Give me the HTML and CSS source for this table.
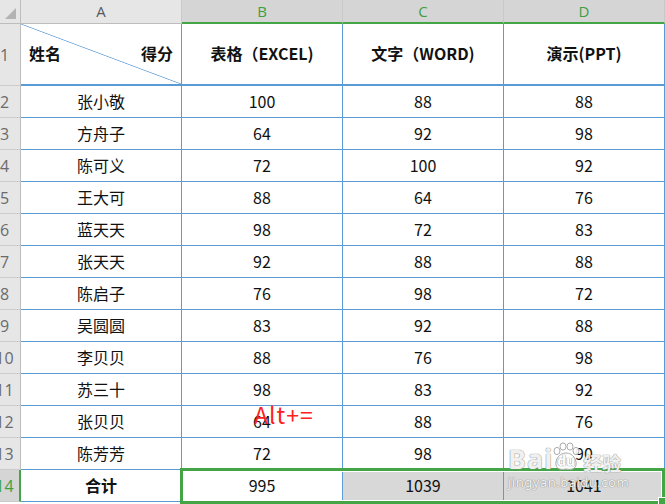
FILE: index.html
```html
<!DOCTYPE html>
<html lang="zh">
<head>
<meta charset="utf-8">
<title>Sheet</title>
<link rel="stylesheet" href="styles.css">
</head>
<body>
<div class="sheet">
  <div class="grid">
    <div class="corner"></div>
    <div class="colhead">A</div>
    <div class="colhead sel">B</div>
    <div class="colhead sel">C</div>
    <div class="colhead sel">D</div>

    <div class="rowhead"><span>1</span></div>
    <div class="cell head diag"><span>姓名</span><span>得分</span></div>
    <div class="cell head">表格（EXCEL)</div>
    <div class="cell head">文字（WORD)</div>
    <div class="cell head">演示(PPT)</div>

    <div class="rowhead"><span>2</span></div><div class="cell">张小敬</div><div class="cell">100</div><div class="cell">88</div><div class="cell">88</div>
    <div class="rowhead"><span>3</span></div><div class="cell">方舟子</div><div class="cell">64</div><div class="cell">92</div><div class="cell">98</div>
    <div class="rowhead"><span>4</span></div><div class="cell">陈可义</div><div class="cell">72</div><div class="cell">100</div><div class="cell">92</div>
    <div class="rowhead"><span>5</span></div><div class="cell">王大可</div><div class="cell">88</div><div class="cell">64</div><div class="cell">76</div>
    <div class="rowhead"><span>6</span></div><div class="cell">蓝天天</div><div class="cell">98</div><div class="cell">72</div><div class="cell">83</div>
    <div class="rowhead"><span>7</span></div><div class="cell">张天天</div><div class="cell">92</div><div class="cell">88</div><div class="cell">88</div>
    <div class="rowhead"><span>8</span></div><div class="cell">陈启子</div><div class="cell">76</div><div class="cell">98</div><div class="cell">72</div>
    <div class="rowhead"><span>9</span></div><div class="cell">吴圆圆</div><div class="cell">83</div><div class="cell">92</div><div class="cell">88</div>
    <div class="rowhead"><span>10</span></div><div class="cell">李贝贝</div><div class="cell">88</div><div class="cell">76</div><div class="cell">98</div>
    <div class="rowhead"><span>11</span></div><div class="cell">苏三十</div><div class="cell">98</div><div class="cell">83</div><div class="cell">92</div>
    <div class="rowhead"><span>12</span></div><div class="cell">张贝贝</div><div class="cell">64</div><div class="cell">88</div><div class="cell">76</div>
    <div class="rowhead"><span>13</span></div><div class="cell">陈芳芳</div><div class="cell">72</div><div class="cell">98</div><div class="cell">90</div>
    <div class="rowhead sel"><span>14</span></div><div class="cell total">合计</div><div class="cell">995</div><div class="cell shaded">1039</div><div class="cell shaded">1041</div>
  </div>

  <div class="selection"><div class="handle"></div></div>
  <div class="note">Alt+=</div>

  <div class="watermark">
    <div class="wm-top">
      <span class="wm-bai">Bai</span>
      <span class="wm-paw">
        <svg width="30" height="30" viewBox="0 0 30 30">
          <g fill="rgba(255,255,255,0.9)" stroke="#aaa" stroke-width="1">
            <ellipse cx="6" cy="9" rx="3" ry="3.6"/>
            <ellipse cx="12" cy="4.5" rx="3" ry="3.6"/>
            <ellipse cx="19" cy="4.5" rx="3" ry="3.6"/>
            <ellipse cx="25" cy="9" rx="3" ry="3.6"/>
            <path d="M15 11 C8 11 4 18 5 23 C6 28 12 28 15 27 C18 28 24 28 25 23 C26 18 22 11 15 11 Z"/>
          </g>
        </svg>
        <span class="wm-du">du</span>
      </span>
      <span class="wm-jy">经验</span>
    </div>
    <div class="wm-url">jingyan.baidu.com</div>
  </div>
</div>
</body>
</html>
```

FILE: styles.css
```css
body {
  margin: 0;
  background: #fff;
  font-family: "Noto Sans CJK SC", "Noto Sans", sans-serif;
}

.sheet {
  position: relative;
  width: 665px;
  height: 504px;
  overflow: hidden;
}

.grid {
  display: grid;
  grid-template-columns: 21px repeat(4, 161px);
  grid-template-rows: 24px 62px repeat(13, 32px);
}

.grid > div {
  box-sizing: border-box;
  display: flex;
  align-items: center;
  justify-content: center;
  font-size: 16px;
  line-height: 1;
}

.corner {
  position: relative;
  background: #e6e6e6;
  border-right: 1px solid #bdbdbd;
  border-bottom: 1px solid #bdbdbd;
}

.corner::after {
  content: "";
  position: absolute;
  right: 4px;
  bottom: 4px;
  width: 11px;
  height: 11px;
  background: #b3b3b3;
  clip-path: polygon(100% 0, 100% 100%, 0 100%);
}

.colhead {
  background: #e6e6e6;
  color: #5a5a5a;
  border-right: 1px solid #c9c9c9;
  border-bottom: 1px solid #bdbdbd;
  font-family: "Open Sans", "Noto Sans", sans-serif;
  font-size: 15px !important;
}

.colhead.sel {
  background: #d5d5d5;
  color: #3e9f3e;
  border-bottom: 2px solid #44a546;
}

.rowhead {
  background: #e6e6e6;
  color: #6b6b6b;
  border-right: 1px solid #bdbdbd;
  border-bottom: 1px solid #cbcbcb;
  justify-content: flex-start !important;
  overflow: hidden;
  font-family: "Open Sans", "Noto Sans", sans-serif;
}

.rowhead span {
  flex: none;
  width: 31px;
  margin-left: -11px;
  text-align: center;
}

.rowhead.sel {
  background: #d5d5d5;
  color: #3e9f3e;
  border-right: 2px solid #44a546;
}

.cell {
  color: #111;
  border-right: 1px solid #5b9bd5;
  border-bottom: 1px solid #5b9bd5;
  padding-bottom: 2px;
}

.head {
  font-weight: bold;
  border-bottom-width: 2px;
}

.diag {
  justify-content: space-between !important;
  padding: 0 8px 2px;
  background: linear-gradient(to top right, transparent calc(50% - 0.8px), #72a9dc 50%, transparent calc(50% + 0.8px));
}

.total {
  font-weight: bold;
}

.shaded {
  background: #d8d8d8;
}

.selection {
  position: absolute;
  left: 180px;
  top: 468px;
  width: 485px;
  height: 36px;
  box-sizing: border-box;
  border: 3px solid #44a546;
  box-shadow: inset 0 0 0 1px #fff;
}

.handle {
  position: absolute;
  right: -4px;
  bottom: -4px;
  width: 6px;
  height: 6px;
  background: #44a546;
  border: 1px solid #fff;
}

.note {
  position: absolute;
  left: 254px;
  top: 401px;
  color: #ff2020;
  font-size: 23px;
  letter-spacing: 1px;
  line-height: 1.2;
  font-family: "Noto Sans CJK SC", "Noto Sans", sans-serif;
}

.watermark {
  position: absolute;
  left: 508px;
  top: 440px;
  display: flex;
  flex-direction: column;
  color: rgba(255, 255, 255, 0.9);
  text-shadow: 0 0 1px #888, 0 0 1px #888;
  font-family: "Noto Sans", sans-serif;
}

.wm-top {
  display: flex;
  align-items: flex-end;
  height: 32px;
}

.wm-bai {
  font-size: 27px;
  font-weight: bold;
  line-height: 1;
  letter-spacing: 1px;
}

.wm-paw {
  position: relative;
  width: 30px;
  height: 30px;
  margin-left: -2px;
}

.wm-paw svg {
  display: block;
}

.wm-du {
  position: absolute;
  left: 6px;
  top: 12px;
  font-size: 14px;
  font-weight: bold;
  line-height: 1;
  color: #fff;
}

.wm-jy {
  font-family: "Noto Sans CJK SC", sans-serif;
  font-size: 19px;
  font-weight: bold;
  line-height: 1;
  margin-left: 2px;
}

.wm-url {
  font-size: 13px;
  letter-spacing: 0.5px;
  margin-top: 4px;
  line-height: 1;
}
```
